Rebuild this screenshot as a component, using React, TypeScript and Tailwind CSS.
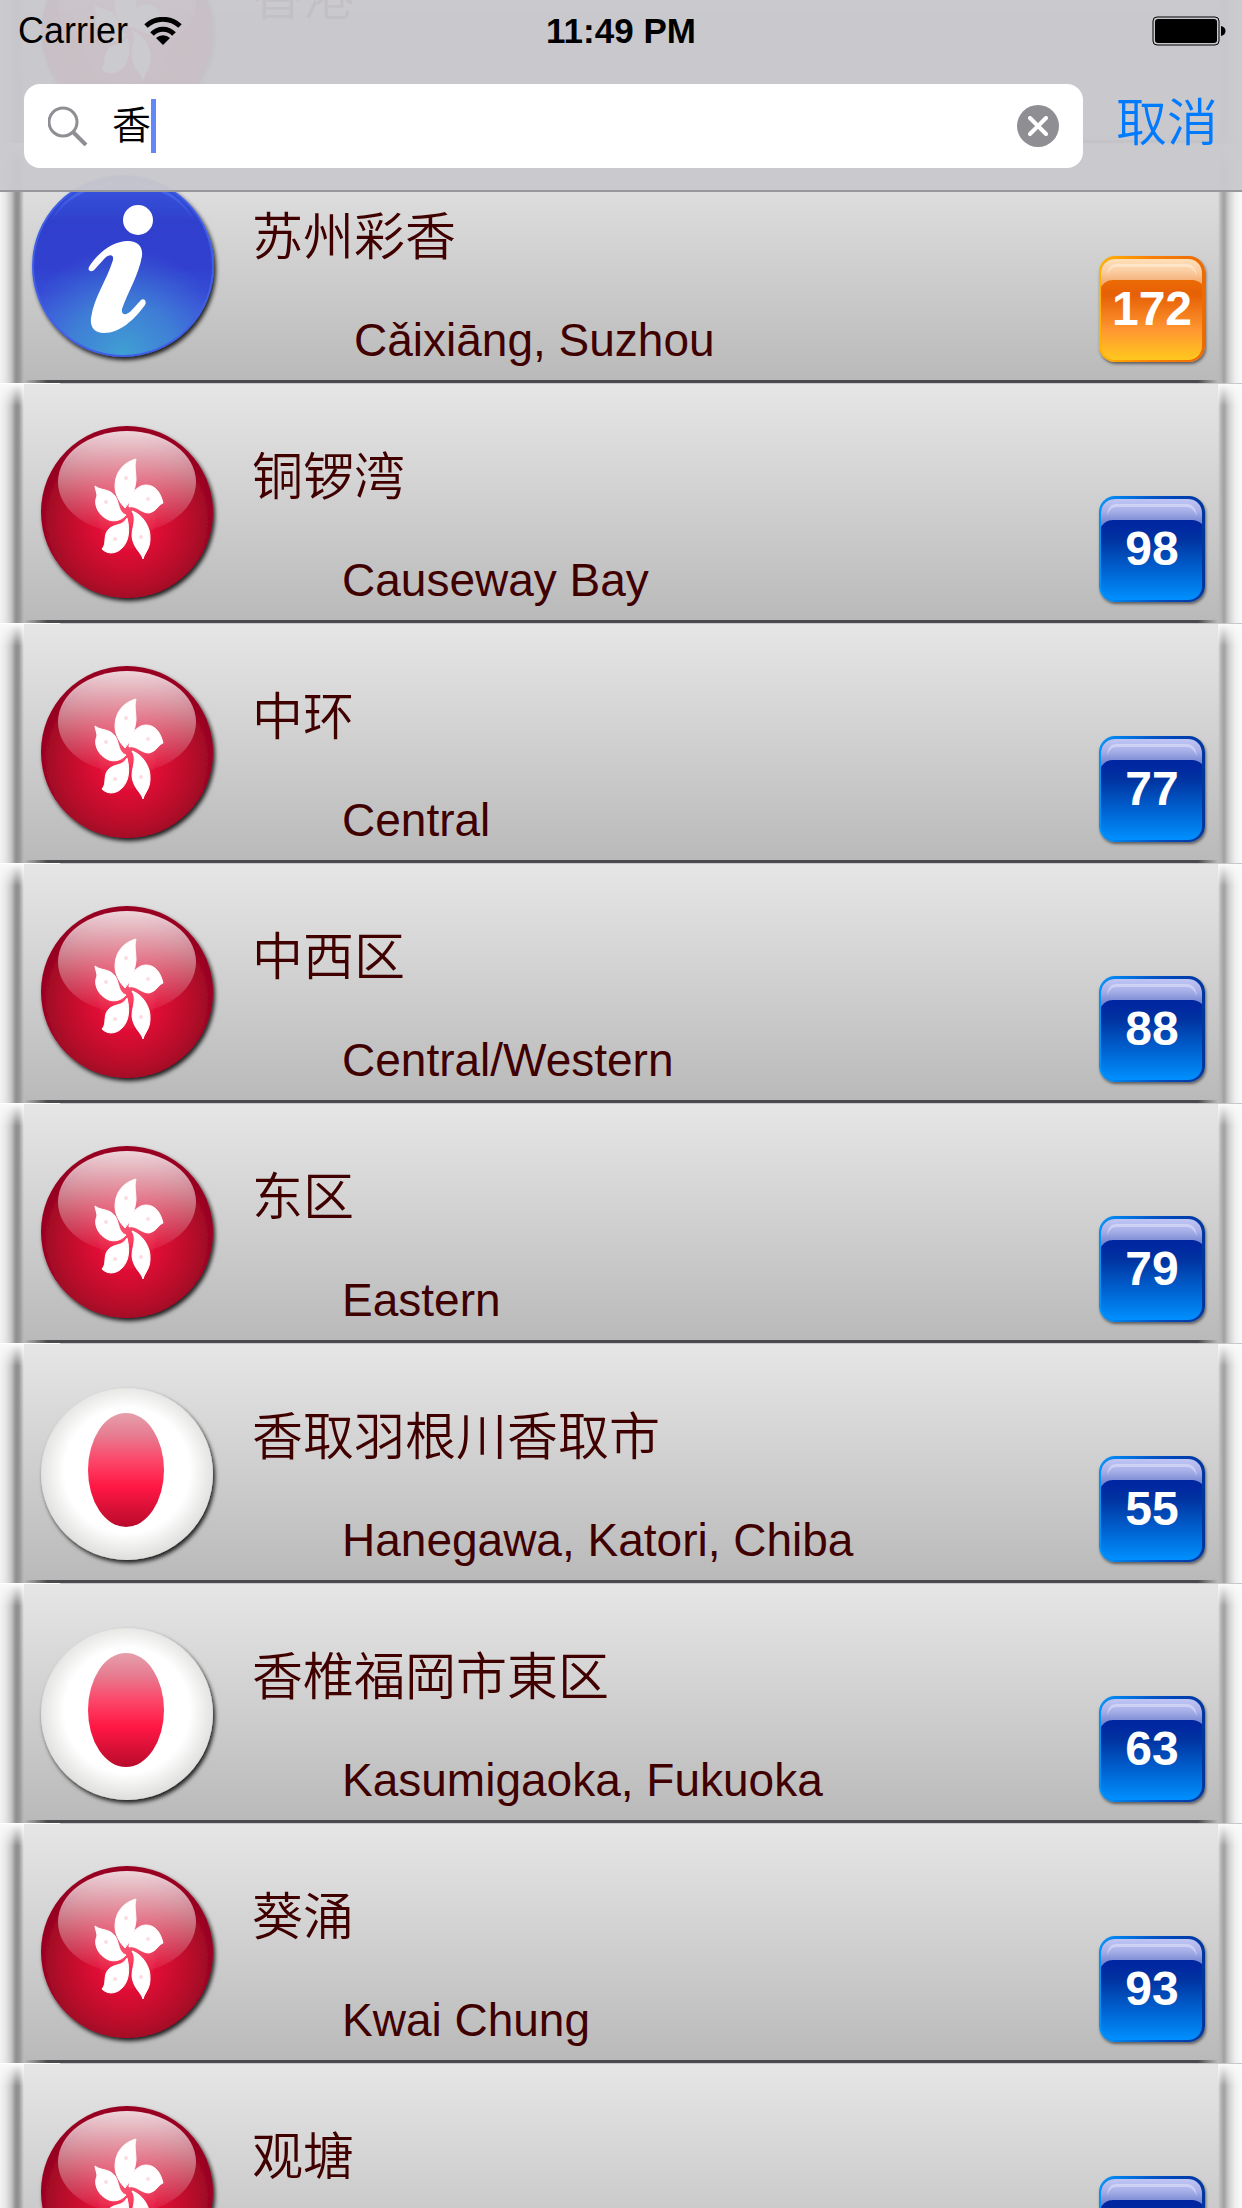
import React, { useState } from 'react';
import { clsx } from 'clsx';

type Emblem = 'info' | 'hongkong' | 'japan';

interface Place {
  name: string;
  english: string;
  emblem: Emblem;
  reading?: number;
}

const places: Place[] = [
  { name: '香港', english: 'Hong Kong', emblem: 'hongkong' },
  { name: '苏州彩香', english: 'Cǎixiāng, Suzhou', emblem: 'info', reading: 172 },
  { name: '铜锣湾', english: 'Causeway Bay', emblem: 'hongkong', reading: 98 },
  { name: '中环', english: 'Central', emblem: 'hongkong', reading: 77 },
  { name: '中西区', english: 'Central/Western', emblem: 'hongkong', reading: 88 },
  { name: '东区', english: 'Eastern', emblem: 'hongkong', reading: 79 },
  { name: '香取羽根川香取市', english: 'Hanegawa, Katori, Chiba', emblem: 'japan', reading: 55 },
  { name: '香椎福岡市東区', english: 'Kasumigaoka, Fukuoka', emblem: 'japan', reading: 63 },
  { name: '葵涌', english: 'Kwai Chung', emblem: 'hongkong', reading: 93 },
  { name: '观塘', english: 'Kwun Tong', emblem: 'hongkong', reading: 84 },
];

// Gradients shared by every emblem and badge
function SharedDefs() {
  return (
    <svg className="absolute h-0 w-0" aria-hidden="true">
      <defs>
        <filter id="drop" x="-10%" y="-10%" width="125%" height="125%">
          <feDropShadow dx="2" dy="3" stdDeviation="2" floodColor="#000" floodOpacity="0.85" />
        </filter>
        <radialGradient id="hk-base" cx="0.5" cy="0.55" r="0.5">
          <stop offset="0" stopColor="#ff2a50" />
          <stop offset="0.4" stopColor="#dc0c33" />
          <stop offset="0.8" stopColor="#b20a2a" />
          <stop offset="1" stopColor="#980522" />
        </radialGradient>
        <linearGradient id="hk-gloss" x1="0" y1="0" x2="0" y2="1">
          <stop offset="0" stopColor="#fff" stopOpacity="0.84" />
          <stop offset="0.5" stopColor="#fff" stopOpacity="0.42" />
          <stop offset="1" stopColor="#fff" stopOpacity="0.02" />
        </linearGradient>
        <radialGradient id="jp-base" cx="0.5" cy="0.48" r="0.52">
          <stop offset="0.7" stopColor="#fff" />
          <stop offset="1" stopColor="#dededc" />
        </radialGradient>
        <linearGradient id="jp-sun" x1="0" y1="0" x2="0" y2="1">
          <stop offset="0" stopColor="#e59fac" />
          <stop offset="0.2" stopColor="#e77b90" />
          <stop offset="0.4" stopColor="#fb4a6c" />
          <stop offset="0.65" stopColor="#ff1744" />
          <stop offset="1" stopColor="#b80a2b" />
        </linearGradient>
        <linearGradient id="info-base" x1="0" y1="0" x2="0" y2="1">
          <stop offset="0" stopColor="#3a58e0" />
          <stop offset="0.25" stopColor="#2f41cc" />
          <stop offset="0.5" stopColor="#3040cf" />
          <stop offset="1" stopColor="#4566e2" />
        </linearGradient>
        <radialGradient id="info-glow" cx="0.5" cy="1" r="0.6">
          <stop offset="0" stopColor="#3fa0d2" />
          <stop offset="0.5" stopColor="#3f8bd4" stopOpacity="0.75" />
          <stop offset="1" stopColor="#3f78d8" stopOpacity="0" />
        </radialGradient>
        <linearGradient id="info-gloss" x1="0" y1="0" x2="0" y2="1">
          <stop offset="0" stopColor="#4a72f2" />
          <stop offset="1" stopColor="#3f5ae4" stopOpacity="0.4" />
        </linearGradient>
        <linearGradient id="blue-fill" x1="0" y1="0" x2="0" y2="1">
          <stop offset="0.25" stopColor="#0026a2" />
          <stop offset="0.4" stopColor="#0033a0" />
          <stop offset="1" stopColor="#0090ff" />
        </linearGradient>
        <linearGradient id="blue-edge" x1="0" y1="0" x2="1" y2="0">
          <stop offset="0" stopColor="#0096ff" />
          <stop offset="0.6" stopColor="#004bc0" />
          <stop offset="1" stopColor="#00359c" />
        </linearGradient>
        <linearGradient id="blue-gloss" x1="0" y1="0" x2="0" y2="1">
          <stop offset="0" stopColor="#bfc6f5" />
          <stop offset="0.4" stopColor="#abb2ea" />
          <stop offset="1" stopColor="#6377c9" />
        </linearGradient>
        <linearGradient id="orange-fill" x1="0" y1="0" x2="0" y2="1">
          <stop offset="0.2" stopColor="#ec6c06" />
          <stop offset="0.35" stopColor="#e65f05" />
          <stop offset="0.7" stopColor="#ff9631" />
          <stop offset="1" stopColor="#ffc81e" />
        </linearGradient>
        <linearGradient id="orange-edge" x1="0" y1="0" x2="1" y2="0">
          <stop offset="0" stopColor="#ffb400" />
          <stop offset="0.5" stopColor="#fb7f05" />
          <stop offset="1" stopColor="#ea6a04" />
        </linearGradient>
        <linearGradient id="orange-gloss" x1="0" y1="0" x2="0" y2="1">
          <stop offset="0" stopColor="#ffdfb8" />
          <stop offset="0.4" stopColor="#fbcfa4" />
          <stop offset="1" stopColor="#f2a062" />
        </linearGradient>
      </defs>
    </svg>
  );
}

function HongKongArt() {
  return (
    <>
      <circle cx="103" cy="100" r="86" fill="url(#hk-base)" filter="url(#drop)" />
      <ellipse cx="103" cy="70" rx="69" ry="51" fill="url(#hk-gloss)" />
      <g fill="#fff" stroke="#fff" strokeLinejoin="round">
        <path d="M112 47C100 50 91 60 91 74C91 84 97 92 101 96C106 90 111 80 112 68C112 60 110 54 112 47Z" />
        <path d="M105 95C105 84 112 73 122 73C132 73 137 82 139 91C134 93 133 99 125 101C117 101 112 93 105 95Z" />
        <path d="M108 99C118 102 127 115 126 127C126 137 121 140 119 147C117 140 109 136 108 124C108 115 113 107 108 99Z" />
        <path d="M103 106C106 118 105 128 99 135C93 142 84 143 78 137C83 132 79 124 84 118C90 111 98 115 103 106Z" />
        <path d="M71 74C77 79 85 76 91 84C96 92 94 100 102 103C97 109 88 111 81 106C72 100 70 90 73 84C73 80 71 77 71 74Z" />
      </g>
      <g fill="#fbdde2">
        <circle cx="102" cy="66" r="2" />
        <circle cx="124" cy="87" r="2" />
        <circle cx="117" cy="125" r="2" />
        <circle cx="91" cy="127" r="2" />
        <circle cx="82" cy="90" r="2" />
      </g>
    </>
  );
}

function JapanArt() {
  return (
    <>
      <circle cx="103" cy="102" r="86" fill="url(#jp-base)" filter="url(#drop)" />
      <ellipse cx="102" cy="98" rx="38" ry="57" fill="url(#jp-sun)" />
    </>
  );
}

function InfoArt() {
  return (
    <>
      <circle cx="99" cy="94" r="90" fill="url(#info-base)" stroke="#3f5fe8" strokeWidth="2" filter="url(#drop)" />
      <path d="M28 48C52 -4 146 -4 170 48C154 24 132 14 99 14C66 14 44 24 28 48Z" fill="url(#info-gloss)" />
      <circle cx="99" cy="94" r="89" fill="url(#info-glow)" />
      <circle cx="114" cy="48" r="15" fill="#fff" />
      <path
        d="M65 95C73 82 88 69 104 69C114 69 119 75 118 84C115 102 104 120 98 137C97 144 103 143 107 139L117 128C120 126 123 129 121 133C110 148 96 161 80 161C70 161 66 155 67 146C70 125 82 110 89 88C90 82 85 82 81 86L71 97C68 101 63 99 65 95Z"
        fill="#fff"
      />
    </>
  );
}

function EmblemIcon({ kind }: { kind: Emblem }) {
  return (
    <svg viewBox="0 0 200 200" className="mt-7 h-[200px] w-[200px] shrink-0 overflow-visible" aria-hidden="true">
      {kind === 'hongkong' && <HongKongArt />}
      {kind === 'japan' && <JapanArt />}
      {kind === 'info' && <InfoArt />}
    </svg>
  );
}

function ReadingBadge({ value }: { value: number }) {
  const tone = value > 100 ? 'orange' : 'blue';

  return (
    <div className="relative mr-[13px] mb-[18px] flex h-[106px] w-[106px] shrink-0 items-center justify-center self-end rounded-2xl shadow-[1px_2px_3px_rgba(0,0,0,0.5)]">
      <svg viewBox="0 0 106 106" className="absolute inset-0 h-full w-full" aria-hidden="true">
        <rect width="106" height="106" rx="16" fill={`url(#${tone}-edge)`} />
        <rect x="2" y="3" width="101" height="101" rx="14" fill={`url(#${tone}-fill)`} />
        <path d="M2 31V17C2 9 8 3 16 3H89C97 3 103 9 103 17V28C99 25 97 24 92 24H14C8 24 5 27 2 31Z" fill={`url(#${tone}-gloss)`} />
        <path d="M8 20C9 11 12 8 18 8H87C93 8 97 11 98 20C95 14 92 11 87 11H18C13 11 10 14 8 20Z" fill="#fff" opacity="0.35" />
      </svg>
      <span className="relative text-[48px] leading-[52px] font-bold text-white">{value}</span>
    </div>
  );
}

function PlaceRow({ place }: { place: Place }) {
  return (
    <li>
      <div className="flex bg-linear-to-b from-[#e6e6e6] to-[#b9b9b9]">
        <div className="w-6 shrink-0 bg-[linear-gradient(to_bottom,#fafafa,transparent_22px),linear-gradient(to_right,#f4f4f4,#e4e4e4_6px,#c8c8c8_11px,#8e8e8e_16px,#949494_19px,transparent)]" />
        <div className="flex min-w-0 flex-1 flex-col">
          <div className="flex h-[236px]">
            <EmblemIcon kind={place.emblem} />
            <div className="min-w-0 flex-1 pt-16 pl-7 text-[#400000]">
              <h2 className="truncate text-[51px] leading-[60px] font-[350]">{place.name}</h2>
              <p
                className={clsx(
                  'mt-[46px] truncate text-[46px] leading-[52px]',
                  place.emblem === 'info' ? 'pl-[102px]' : 'pl-[90px]'
                )}
              >
                {place.english}
              </p>
            </div>
            {place.reading !== undefined && <ReadingBadge value={place.reading} />}
          </div>
          <div className="h-[3px] bg-[linear-gradient(to_right,transparent,#484a4b_24px,#484a4b_calc(100%-20px),transparent)]" />
        </div>
        <div className="w-6 shrink-0 bg-[linear-gradient(to_bottom,#fafafa,transparent_22px),linear-gradient(to_right,transparent,#b4b4b4_3px,#a0a0a0_6px,#cfcfcf_11px,#eeeeee_17px,#fafafa)]" />
      </div>
      <div className="h-px bg-[linear-gradient(to_right,#fff_60px,#c8c7cc_60px)]" />
    </li>
  );
}

function StatusBar() {
  return (
    <div className="grid h-[62px] grid-cols-3 items-center px-4 text-[36px] leading-10 text-black">
      <div className="flex items-center gap-4 pl-[2px]">
        <span>Carrier</span>
        <svg viewBox="0 0 38 28" className="h-7 w-[38px]" aria-hidden="true">
          <path d="M2 9A25 25 0 0 1 36 9" fill="none" stroke="#000" strokeWidth="5" />
          <path d="M8 17A15 15 0 0 1 30 17" fill="none" stroke="#000" strokeWidth="5" />
          <path d="M12 21A10 10 0 0 1 26 21L19 28Z" />
        </svg>
      </div>
      <span className="text-center text-[35px] font-bold">11:49 PM</span>
      <svg viewBox="0 0 74 30" className="h-[30px] w-[74px] justify-self-end" aria-hidden="true">
        <rect x="1" y="1" width="66" height="28" rx="4" fill="none" stroke="#000" />
        <rect x="3" y="3" width="62" height="24" rx="3" />
        <path d="M69 10C75 11 75 19 69 20Z" />
      </svg>
    </div>
  );
}

export default function App() {
  const [query, setQuery] = useState('香');

  return (
    <div className="flex h-screen flex-col overflow-hidden bg-white font-['Liberation_Sans','Noto_Sans_CJK_SC',sans-serif]">
      <SharedDefs />

      <header className="relative z-10 h-48 shrink-0 border-b-2 border-[#98979b] bg-[#c9c8cd]/96">
        <StatusBar />
        <form className="mt-[22px] flex h-[84px] items-center pl-6" onSubmit={(e) => e.preventDefault()}>
          <div className="flex h-full min-w-0 flex-1 items-center rounded-[16px] bg-white pr-6 pl-6">
            <svg viewBox="0 0 40 40" className="h-10 w-10 shrink-0" aria-hidden="true">
              <circle cx="15" cy="16" r="14" fill="none" stroke="#8e8e93" strokeWidth="3" />
              <path d="M25 26L38 39" stroke="#8e8e93" strokeWidth="4" />
            </svg>
            <input
              type="text"
              aria-label="搜索"
              value={query}
              onChange={(e) => setQuery(e.target.value)}
              className="ml-6 field-sizing-content min-w-0 bg-transparent text-[39px] leading-[54px] font-[350] text-black outline-none"
            />
            <span className="h-[54px] w-[5px] shrink-0 bg-[#6187f8]" />
            <button
              type="button"
              aria-label="清除"
              onClick={() => setQuery('')}
              className="ml-auto flex h-[42px] w-[42px] shrink-0 items-center justify-center rounded-full bg-[#8e8e93]"
            >
              <svg viewBox="0 0 20 20" className="h-5 w-5" aria-hidden="true">
                <path d="M2 2L18 18M18 2L2 18" stroke="#fff" strokeWidth="4" strokeLinecap="round" />
              </svg>
            </button>
          </div>
          <button type="button" className="shrink-0 pr-6 pb-1 pl-[33px] text-[51px] leading-[60px] font-[350] text-[#007aff]">
            取消
          </button>
        </form>
      </header>

      {/* The list is scrolled, so its first rows run under the translucent header */}
      <ul className="-mt-72 shrink-0">
        {places.map((place) => (
          <PlaceRow key={place.name} place={place} />
        ))}
      </ul>
    </div>
  );
}
